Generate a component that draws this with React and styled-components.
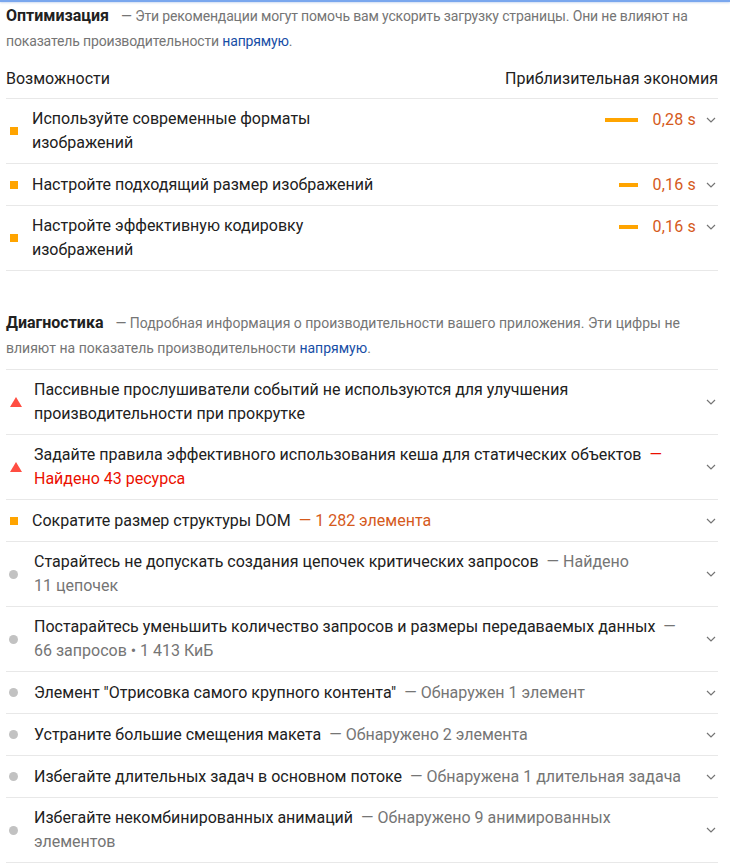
import React from 'react';
import styled, { createGlobalStyle } from 'styled-components';

const GlobalStyle = createGlobalStyle`
  body {
    margin: 0;
    background: #fff;
    font-family: Roboto, 'Noto Sans', sans-serif;
    color: #212121;
  }
`;

const TopStripe = styled.div`
  height: 2px;
  background: #7aa7ee;
  box-shadow: 0 1px 2px rgba(60, 110, 200, 0.25);
`;

const Page = styled.div`
  width: 712px;
  margin-left: 6px;
`;

const Group = styled.section`
  margin-top: ${(p) => p.$gap}px;
`;

const GroupHeader = styled.div`
  font-size: 14px;
  line-height: 25px;
  color: #757575;
  letter-spacing: ${(p) => (p.$tight ? '-0.15px' : 'normal')};
  padding-bottom: ${(p) => (p.$ruled ? 8 : 0)}px;
  border-bottom: ${(p) => (p.$ruled ? '1px solid #e8e8e8' : 'none')};
`;

const GroupTitle = styled.span`
  font-size: 16px;
  font-weight: 700;
  letter-spacing: normal;
  color: #212121;
  margin-right: 12px;
`;

const Link = styled.a`
  color: #174ea6;
  text-decoration: none;
`;

const Columns = styled.div`
  display: flex;
  justify-content: space-between;
  margin-top: 13px;
  padding-bottom: 7px;
  font-size: 16px;
  line-height: 24px;
  border-bottom: 1px solid #e8e8e8;
`;

const Row = styled.div`
  display: flex;
  align-items: center;
  padding: 8px 0 8px 4px;
  border-bottom: 1px solid #e8e8e8;
  font-size: 16px;
  line-height: 24px;
`;

const Square = styled.span`
  flex: none;
  width: 8px;
  height: 8px;
  background: #ffa400;
  margin: 0 14px 0 0;
`;

const Triangle = styled.span`
  flex: none;
  width: 0;
  height: 0;
  border-left: 6px solid transparent;
  border-right: 6px solid transparent;
  border-bottom: 10px solid #ff4e42;
  margin: 0 12px 0 0;
`;

const Dot = styled.span`
  flex: none;
  width: 9px;
  height: 9px;
  border-radius: 50%;
  background: #c2c2c2;
  margin: 0 16px 0 -1px;
`;

const OppTitle = styled.div`
  width: 355px;
`;

const OppStats = styled.div`
  align-self: flex-start;
  flex: 1;
  display: flex;
  align-items: center;
  justify-content: flex-end;
  height: 25px;
`;

const Bar = styled.span`
  height: 4px;
  background: #ffa400;
`;

const Value = styled.span`
  margin-left: 14px;
  min-width: 43px;
  text-align: right;
  color: #d55a1c;
  letter-spacing: 0.2px;
`;

const AuditTitle = styled.div`
  flex: 1;
  padding-right: 12px;
`;

const Display = styled.span`
  margin-left: 8px;
  color: ${(p) => p.$color || '#757575'};
`;

const ChevronBox = styled.span`
  flex: none;
  display: flex;
  align-items: center;
  justify-content: center;
  width: 14px;
  height: 25px;
  margin-left: ${(p) => p.$gap || 0}px;
`;

const Chevron = ({ gap }) => (
  <ChevronBox $gap={gap}>
    <svg width="10" height="6" viewBox="0 0 10 6">
      <path d="M1 1l4 4 4-4" fill="none" stroke="#757575" strokeWidth="1.2" />
    </svg>
  </ChevronBox>
);

const icons = { avg: Square, fail: Triangle, info: Dot };

const opportunities = [
  { title: 'Используйте современные форматы изображений', bar: 33, value: '0,28 s' },
  { title: 'Настройте подходящий размер изображений', bar: 19, value: '0,16 s' },
  { title: 'Настройте эффективную кодировку изображений', bar: 19, value: '0,16 s' },
];

const diagnostics = [
  { icon: 'fail', title: 'Пассивные прослушиватели событий не используются для улучшения производительности при прокрутке' },
  { icon: 'fail', title: 'Задайте правила эффективного использования кеша для статических объектов', display: '— Найдено 43\u00a0ресурса', color: '#eb0f00' },
  { icon: 'avg', title: 'Сократите размер структуры DOM', display: '— 1\u00a0282\u00a0элемента', color: '#d55a1c' },
  { icon: 'info', title: 'Старайтесь не допускать создания цепочек критических запросов', display: '— Найдено 11\u00a0цепочек' },
  { icon: 'info', title: 'Постарайтесь уменьшить количество запросов и размеры передаваемых данных', display: '— 66\u00a0запросов • 1\u00a0413\u00a0КиБ' },
  { icon: 'info', title: 'Элемент "Отрисовка самого крупного контента"', display: '— Обнаружен 1 элемент' },
  { icon: 'info', title: 'Устраните большие смещения макета', display: '— Обнаружено 2 элемента' },
  { icon: 'info', title: 'Избегайте длительных задач в основном потоке', display: '— Обнаружена 1 длительная задача' },
  { icon: 'info', title: 'Избегайте некомбинированных анимаций', display: '— Обнаружено 9 анимированных элементов' },
];

export default function App() {
  return (
    <>
      <GlobalStyle />
      <TopStripe />
      <Page>
        <Group $gap={1}>
          <GroupHeader $tight>
            <GroupTitle>Оптимизация</GroupTitle>— Эти рекомендации могут помочь вам ускорить загрузку страницы.
            Они не влияют на показатель производительности <Link>напрямую</Link>.
          </GroupHeader>
          <Columns>
            <span>Возможности</span>
            <span>Приблизительная экономия</span>
          </Columns>
          {opportunities.map((o) => (
            <Row key={o.title}>
              <Square />
              <OppTitle>{o.title}</OppTitle>
              <OppStats>
                <Bar style={{ width: o.bar }} />
                <Value>{o.value}</Value>
                <Chevron gap={8} />
              </OppStats>
            </Row>
          ))}
        </Group>

        <Group $gap={39}>
          <GroupHeader $ruled>
            <GroupTitle>Диагностика</GroupTitle>— Подробная информация о производительности вашего приложения.
            Эти цифры не влияют на показатель производительности <Link>напрямую</Link>.
          </GroupHeader>
          {diagnostics.map((d) => {
            const Icon = icons[d.icon];
            return (
              <Row key={d.title}>
                <Icon />
                <AuditTitle>
                  {d.title}
                  {d.display && <Display $color={d.color}>{d.display}</Display>}
                </AuditTitle>
                <Chevron />
              </Row>
            );
          })}
        </Group>
      </Page>
    </>
  );
}
